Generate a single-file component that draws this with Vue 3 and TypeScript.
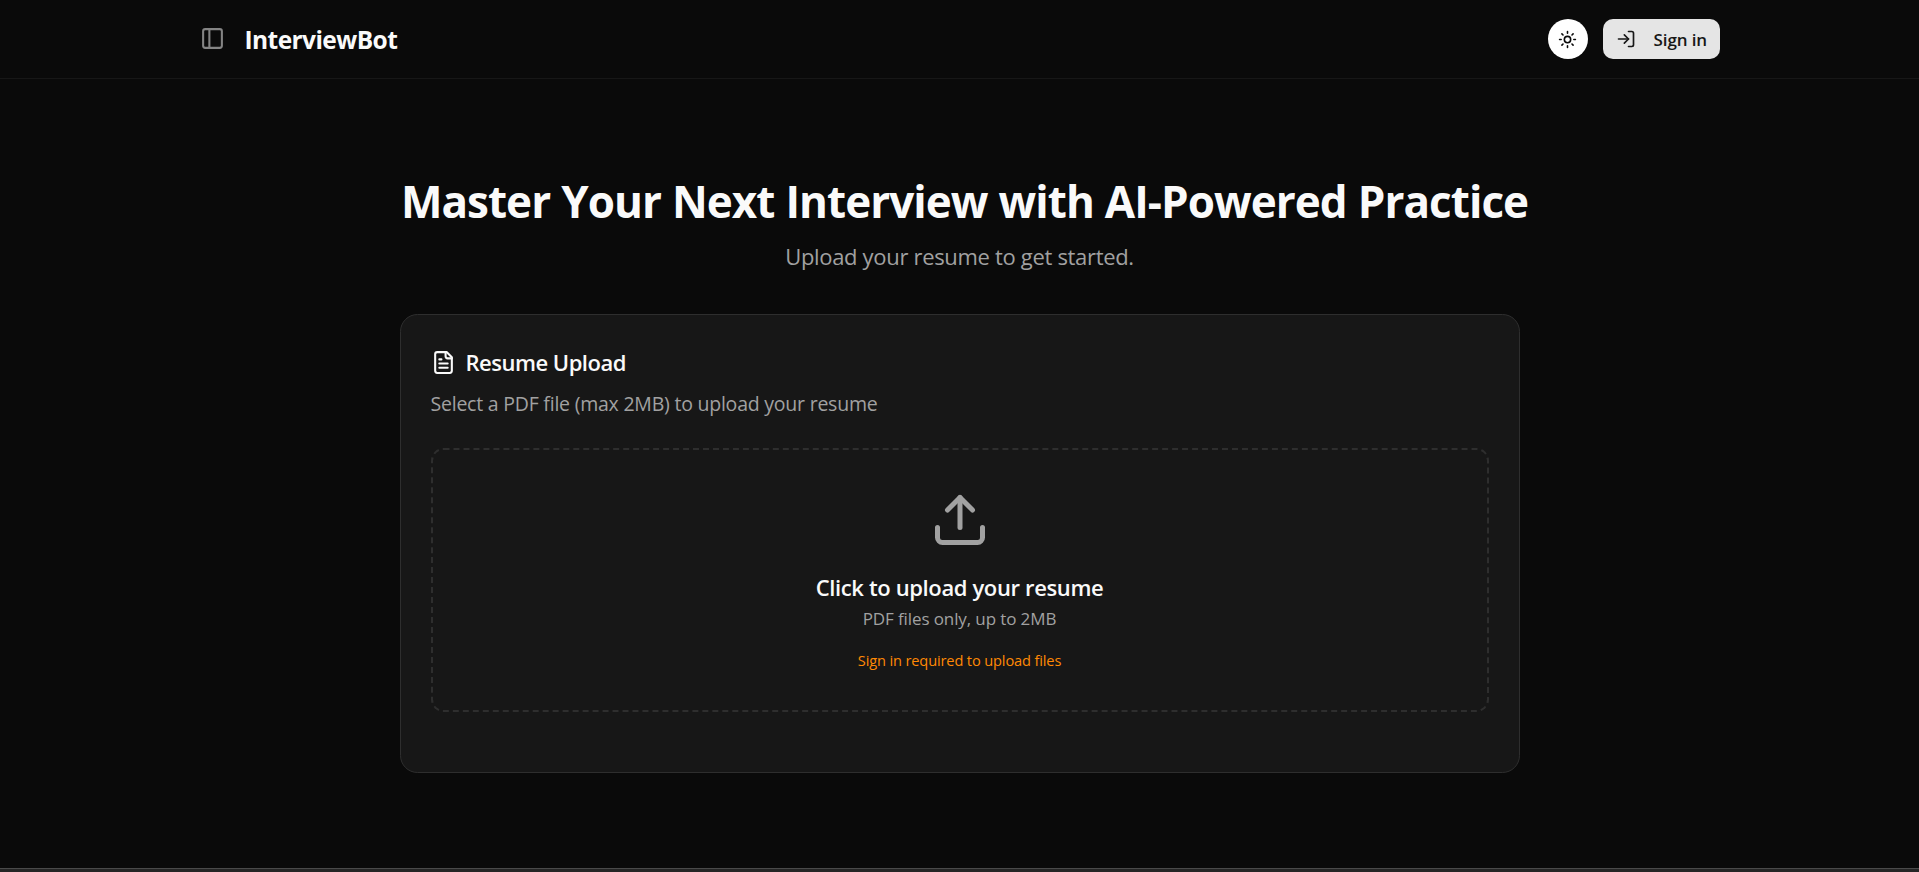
<script setup lang="ts">
import { ref } from 'vue'

const fileInput = ref<HTMLInputElement | null>(null)

function openPicker(): void {
  fileInput.value?.click()
}
</script>

<template>
  <div class="page">
    <header class="header">
      <div class="header-inner">
        <div class="brand">
          <button class="icon-button" type="button" aria-label="Toggle sidebar">
            <svg class="icon panel-icon" viewBox="0 0 24 24">
              <rect x="3" y="3" width="18" height="18" rx="2" />
              <path d="M9 3v18" />
            </svg>
          </button>
          <span class="brand-name">InterviewBot</span>
        </div>
        <div class="actions">
          <button class="theme-button" type="button" aria-label="Toggle theme">
            <svg class="icon sun-icon" viewBox="0 0 24 24">
              <circle cx="12" cy="12" r="4" />
              <path d="M12 2v2M12 20v2M4.93 4.93l1.41 1.41M17.66 17.66l1.41 1.41M2 12h2M20 12h2M6.34 17.66l-1.41 1.41M19.07 4.93l-1.41 1.41" />
            </svg>
          </button>
          <button class="sign-in" type="button">
            <svg class="icon login-icon" viewBox="0 0 24 24">
              <path d="m10 17 5-5-5-5" />
              <path d="M15 12H3" />
              <path d="M15 3h4a2 2 0 0 1 2 2v14a2 2 0 0 1-2 2h-4" />
            </svg>
            <span>Sign in</span>
          </button>
        </div>
      </div>
    </header>

    <main class="main">
      <h1 class="title">Master Your Next Interview with AI-Powered Practice</h1>
      <p class="subtitle">Upload your resume to get started.</p>

      <section class="card">
        <h2 class="card-title">
          <svg class="icon file-icon" viewBox="0 0 24 24">
            <path d="M15 2H6a2 2 0 0 0-2 2v16a2 2 0 0 0 2 2h12a2 2 0 0 0 2-2V7Z" />
            <path d="M14 2v4a2 2 0 0 0 2 2h4" />
            <path d="M10 9H8M16 13H8M16 17H8" />
          </svg>
          <span>Resume Upload</span>
        </h2>
        <p class="card-text">Select a PDF file (max 2MB) to upload your resume</p>

        <div class="dropzone" @click="openPicker">
          <input ref="fileInput" class="file-input" type="file" accept="application/pdf" />
          <svg class="icon upload-icon" viewBox="0 0 24 24">
            <path d="M12 3v12" />
            <path d="m17 8-5-5-5 5" />
            <path d="M21 15v4a2 2 0 0 1-2 2H5a2 2 0 0 1-2-2v-4" />
          </svg>
          <p class="drop-title">Click to upload your resume</p>
          <p class="drop-hint">PDF files only, up to 2MB</p>
          <p class="drop-warning">Sign in required to upload files</p>
        </div>
      </section>
    </main>

    <footer class="footer"></footer>
  </div>
</template>

<style>
body {
  margin: 0;
  background: #0a0a0a;
}
</style>

<style scoped>
.page {
  display: flex;
  flex-direction: column;
  height: 872px;
  overflow: hidden;
  background: #0a0a0a;
  color: #fafafa;
  font-family: "Segoe UI", "Open Sans", "Noto Sans", sans-serif;
}
h1,
h2,
p {
  margin: 0;
}
button {
  border: 0;
  padding: 0;
  font: inherit;
  cursor: pointer;
}
.icon {
  display: block;
  flex: none;
  fill: none;
  stroke: currentColor;
  stroke-width: 2;
  stroke-linecap: round;
  stroke-linejoin: round;
}
.header {
  height: 78px;
  border-bottom: 1px solid #171717;
}
.header-inner {
  display: flex;
  align-items: center;
  justify-content: space-between;
  width: 1520px;
  height: 78px;
  margin: 0 auto;
}
.brand {
  display: flex;
  align-items: center;
  gap: 20px;
}
.icon-button {
  padding-bottom: 1px;
  background: none;
  color: #848484;
}
.panel-icon {
  width: 25px;
  height: 25px;
}
.brand-name {
  font-size: 24.5px;
  font-weight: 700;
  line-height: 35px;
  letter-spacing: -0.57px;
}
.actions {
  display: flex;
  gap: 15px;
}
.theme-button {
  display: grid;
  place-items: center;
  width: 40px;
  height: 40px;
  border-radius: 50%;
  background: #fff;
  color: #0a0a0a;
}
.sun-icon {
  width: 19px;
  height: 19px;
}
.sign-in {
  display: flex;
  align-items: center;
  gap: 18px;
  width: 117px;
  height: 40px;
  padding-left: 13px;
  box-sizing: border-box;
  border-radius: 10px;
  background: #e5e5e5;
  color: #171717;
  font-size: 17px;
  font-weight: 600;
  letter-spacing: -0.1px;
}
.login-icon {
  width: 20px;
  height: 20px;
}
.main {
  display: flex;
  flex: 1;
  flex-direction: column;
  align-items: center;
  width: 1120px;
  margin: 0 auto;
  padding-top: 97px;
}
.title {
  margin-left: 10px;
  font-size: 44px;
  font-weight: 700;
  line-height: 50px;
  letter-spacing: -0.95px;
  word-spacing: 0.5px;
  white-space: nowrap;
}
.subtitle {
  margin-top: 13px;
  color: #a1a1a1;
  font-size: 22px;
  line-height: 35px;
  letter-spacing: -0.32px;
}
.card {
  width: 1120px;
  height: 459px;
  margin-top: 40px;
  padding: 30px;
  box-sizing: border-box;
  border: 1px solid #2e2e2e;
  border-radius: 17.5px;
  background: #171717;
}
.card-title {
  display: flex;
  align-items: center;
  gap: 10px;
  font-size: 22px;
  font-weight: 600;
  line-height: 35px;
  letter-spacing: -0.5px;
}
.file-icon {
  width: 25px;
  height: 25px;
}
.card-text {
  margin-top: 9px;
  color: #a1a1a1;
  font-size: 19.5px;
  line-height: 30px;
  letter-spacing: -0.225px;
}
.dropzone {
  display: flex;
  flex-direction: column;
  align-items: center;
  height: 264px;
  margin-top: 29px;
  padding: 40px 0;
  box-sizing: border-box;
  border: 2px dashed #2e2e2e;
  border-radius: 12.5px;
  cursor: pointer;
}
.file-input {
  display: none;
}
.upload-icon {
  width: 60px;
  height: 60px;
  color: #a1a1a1;
}
.drop-title {
  margin-top: 20px;
  font-size: 22px;
  font-weight: 600;
  line-height: 35px;
  letter-spacing: -0.37px;
}
.drop-hint {
  margin-top: 1px;
  color: #a1a1a1;
  font-size: 17px;
  line-height: 25px;
  letter-spacing: -0.11px;
}
.drop-warning {
  margin-top: 19px;
  color: #ff8904;
  font-size: 14.6px;
  line-height: 20px;
  letter-spacing: -0.135px;
}
.footer {
  height: 3px;
  border-top: 1px solid #4a4a4a;
  background: #252525;
}
</style>
